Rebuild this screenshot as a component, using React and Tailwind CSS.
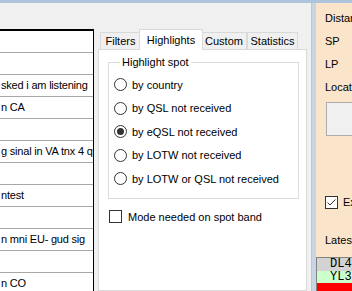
import React from "react";

const rows = [
  "",
  "",
  "sked i am listening",
  "n CA",
  "",
  "g sinal in VA tnx 4 q",
  "",
  "ntest",
  "",
  "n mni EU- gud sig",
  "",
  "n CO",
];

const options = [
  { label: "by country", checked: false },
  { label: "by QSL not received", checked: false },
  { label: "by eQSL not received", checked: true },
  { label: "by LOTW not received", checked: false },
  { label: "by LOTW or QSL not received", checked: false },
];

function Radio({ checked }) {
  return (
    <span className="w-[13px] h-[13px] rounded-full border border-[#333] bg-white flex items-center justify-center shrink-0">
      {checked && <span className="w-[7px] h-[7px] rounded-full bg-[#333]" />}
    </span>
  );
}

function Tab({ label, selected, className }) {
  if (selected) {
    return (
      <div
        className={`relative z-10 h-[21px] -mx-[2px] bg-white border border-b-0 border-[#d9d9d9] flex items-start pt-[2px] justify-center ${className}`}
      >
        {label}
      </div>
    );
  }
  return (
    <div
      className={`h-[18px] bg-[#f0f0f0] border border-b-0 border-[#d9d9d9] flex items-center justify-center ${className}`}
    >
      {label}
    </div>
  );
}

export default function App() {
  return (
    <div
      className="w-[352px] h-[291px] overflow-hidden bg-[#f0f0f0] flex flex-col text-[11px] text-black"
      style={{ fontFamily: '"Liberation Sans", Arial, sans-serif' }}
    >
      <div className="h-[3px] bg-[#aec3dc] shrink-0" />
      <div className="flex flex-1 min-h-0">
        {/* spot list, scrolled so the comment column is cut at the left */}
        <div className="w-[98px] shrink-0 pt-[26px]">
          <div className="w-[94px] h-full bg-white border-t-2 border-r border-black overflow-hidden">
            {rows.map((r, i) => (
              <div
                key={i}
                className="h-[22px] border-b border-[#a8a8a8] flex items-center pl-[1px] whitespace-nowrap tracking-[-0.2px] overflow-hidden"
              >
                {r}
              </div>
            ))}
          </div>
        </div>

        {/* tab control */}
        <div className="w-[209px] shrink-0 pt-[26px] flex flex-col">
          <div className="flex items-end h-[21px] pl-[2px]">
            <Tab label="Filters" className="w-[41px]" />
            <Tab label="Highlights" selected className="w-[64px]" />
            <Tab label="Custom" className="w-[46px]" />
            <Tab label="Statistics" className="w-[51px]" />
          </div>
          <div className="flex-1 bg-white border border-[#d9d9d9] -mt-px pt-[5px] px-[9px]">
            <fieldset className="border border-[#dcdcdc] w-[191px] pl-[5px] pb-[7px]">
              <legend className="ml-[6px] px-[2px] leading-[15px]">Highlight spot</legend>
              <div className="pt-[3px]">
                {options.map((o) => (
                  <div key={o.label} className="h-[23.5px] flex items-center gap-[5px]">
                    <Radio checked={o.checked} />
                    <span>{o.label}</span>
                  </div>
                ))}
              </div>
            </fieldset>
            <div className="flex items-center gap-[6px] mt-[10px] pl-px">
              <span className="w-[13px] h-[13px] border border-[#333] bg-white shrink-0" />
              <span>Mode needed on spot band</span>
            </div>
          </div>
        </div>

        <div className="w-[4px] shrink-0" />
        <div className="w-[5px] shrink-0 bg-[#c9d5e3] border-l border-[#b9c7d8]" />

        {/* info panel */}
        <div className="flex-1 bg-[#fae5ca] flex flex-col pt-[4px]">
          <div className="pl-[9px] whitespace-nowrap flex flex-col">
            <div className="h-[23px] flex items-center">Distance</div>
            <div className="h-[23px] flex items-center">SP</div>
            <div className="h-[23px] flex items-center">LP</div>
            <div className="h-[23px] flex items-center">Locator</div>
            <div className="mt-[3px] ml-px h-[34px] bg-[#f0f0f0] border border-[#adadad]" />
          </div>
          <div className="pl-[9px] mt-[60px] h-[13px] flex items-center gap-[5px] whitespace-nowrap">
            <span className="w-[13px] h-[13px] border border-[#333] bg-white flex items-center justify-center shrink-0">
              <svg width="11" height="11" viewBox="0 0 11 11">
                <path d="M1.5 5.5 L4 8 L9.5 2.5" fill="none" stroke="#333" strokeWidth="1" />
              </svg>
            </span>
            <span>Export</span>
          </div>
          <div className="pl-[9px] mt-[25px] h-[13px] leading-[13px] whitespace-nowrap">Latest</div>
          <div
            className="mt-[10px] border-t border-l border-[#828282] text-[12px] leading-[12px] whitespace-nowrap"
            style={{ fontFamily: '"Liberation Mono", "Courier New", monospace' }}
          >
            <div className="h-[13px] bg-[#d3d3d3] pl-[13px]">DL4</div>
            <div className="h-[12px] bg-[#ccffcc] pl-[13px]">YL3</div>
            <div className="h-[12px] bg-[#ff0000]" />
          </div>
        </div>
      </div>
    </div>
  );
}
